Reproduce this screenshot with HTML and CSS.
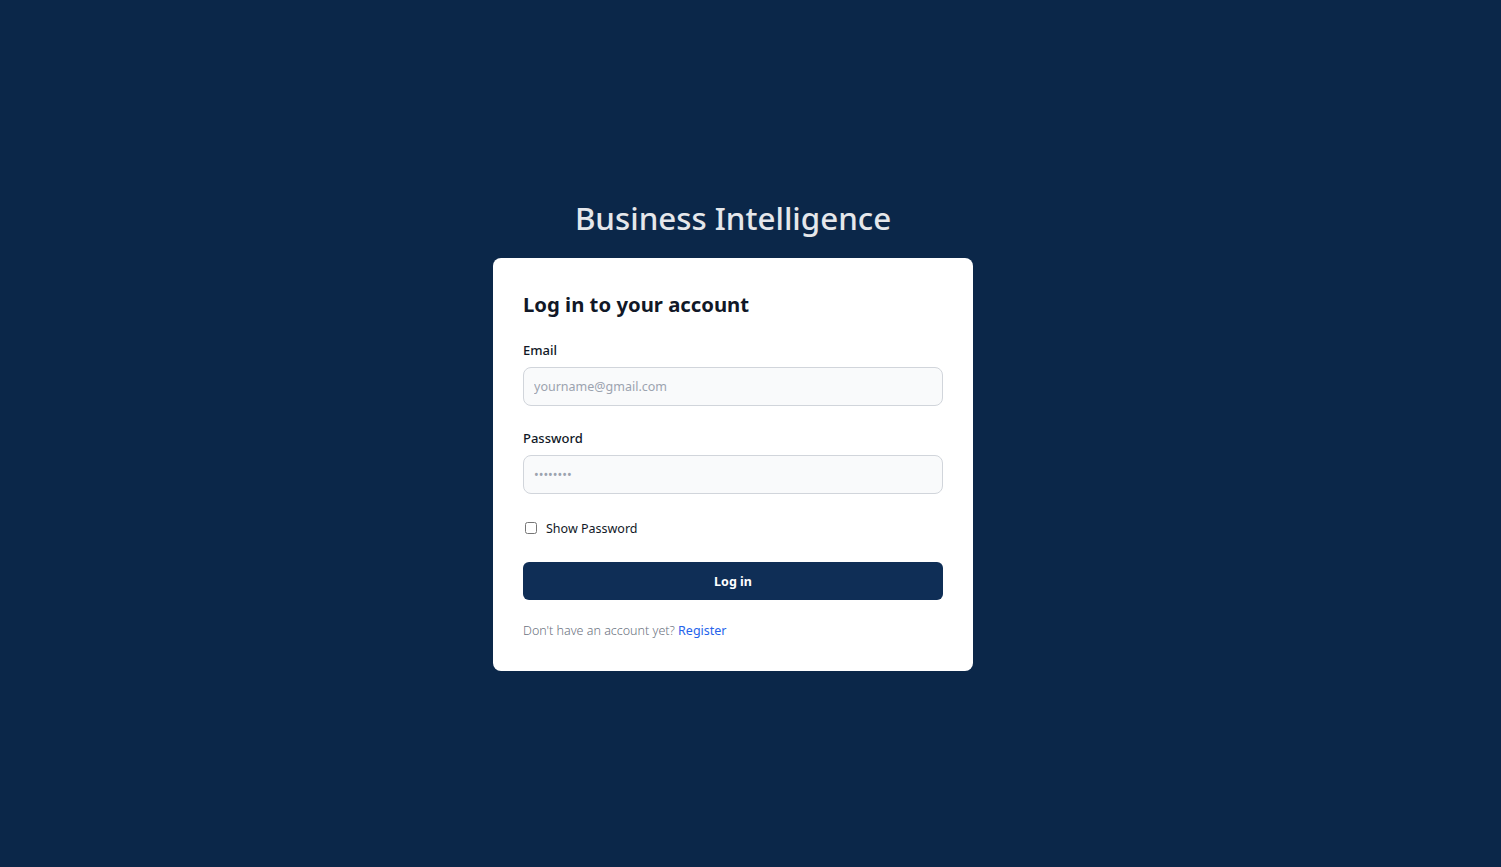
FILE: index.html
```html
<!DOCTYPE html>
<html lang="en">
<head>
<meta charset="utf-8">
<title>Business Intelligence - Log in</title>
<link rel="stylesheet" href="styles.css">
</head>
<body>
<main class="page">
  <h1 class="brand">Business Intelligence</h1>
  <form class="card">
    <h2 class="card-title">Log in to your account</h2>
    <div class="field">
      <label class="label" for="email">Email</label>
      <input class="input" id="email" type="email" placeholder="yourname@gmail.com">
    </div>
    <div class="field field-second">
      <label class="label" for="password">Password</label>
      <input class="input" id="password" type="password" placeholder="••••••••">
    </div>
    <label class="check">
      <input type="checkbox" class="check-box">
      <span>Show Password</span>
    </label>
    <button type="button" class="btn">Log in</button>
    <p class="footer">Don't have an account yet? <a href="#" class="link">Register</a></p>
  </form>
</main>
</body>
</html>
```
FILE: styles.css
```css
* { box-sizing: border-box; }
html, body { margin: 0; padding: 0; }
body {
  background: #0b2749;
  font-family: "Noto Sans", "Open Sans", sans-serif;
  color: #111827;
}
.page {
  min-height: 867px;
  padding: 1px 35px 0 0;
  display: flex;
  flex-direction: column;
  align-items: center;
  justify-content: center;
}
.brand {
  margin: 0 0 20px;
  font-size: 31.3px;
  line-height: 40px;
  font-weight: 500;
  color: #e5e7eb;
}
.card {
  width: 480px;
  background: #ffffff;
  border-radius: 8px;
  padding: 30px;
  display: flex;
  flex-direction: column;
}
.card-title {
  margin: 0 0 20px;
  font-size: 20.3px;
  line-height: 32px;
  font-weight: 700;
  color: #111827;
}
.field { display: flex; flex-direction: column; }
.field-second { margin-top: 22px; }
.label {
  font-size: 13px;
  line-height: 20px;
  font-weight: 500;
  color: #111827;
  margin-bottom: 7px;
}
.input {
  height: 39px;
  width: 100%;
  border: 1px solid #d1d5db;
  border-radius: 8px;
  background: #f9fafb;
  padding: 0 10px;
  font-family: inherit;
  font-size: 12.5px;
  color: #111827;
  outline: none;
}
.input::placeholder { color: #9ca3af; }
.check {
  margin-top: 25px;
  display: flex;
  align-items: center;
  height: 20px;
  font-size: 12.5px;
  color: #111827;
}
.check-box {
  margin: -2px 9px 0 2px;
  width: 12px;
  height: 12px;
}
.btn {
  margin-top: 23px;
  height: 38px;
  padding-top: 2px;
  border: none;
  border-radius: 6px;
  background: #0f2e56;
  color: #ffffff;
  font-family: inherit;
  font-size: 12.5px;
  font-weight: 700;
  cursor: pointer;
}
.footer {
  margin: 21px 0 0;
  font-size: 12.5px;
  line-height: 20px;
  font-weight: 300;
  color: #6b7280;
}
.link {
  color: #2563eb;
  font-weight: 400;
  text-decoration: none;
}
```
